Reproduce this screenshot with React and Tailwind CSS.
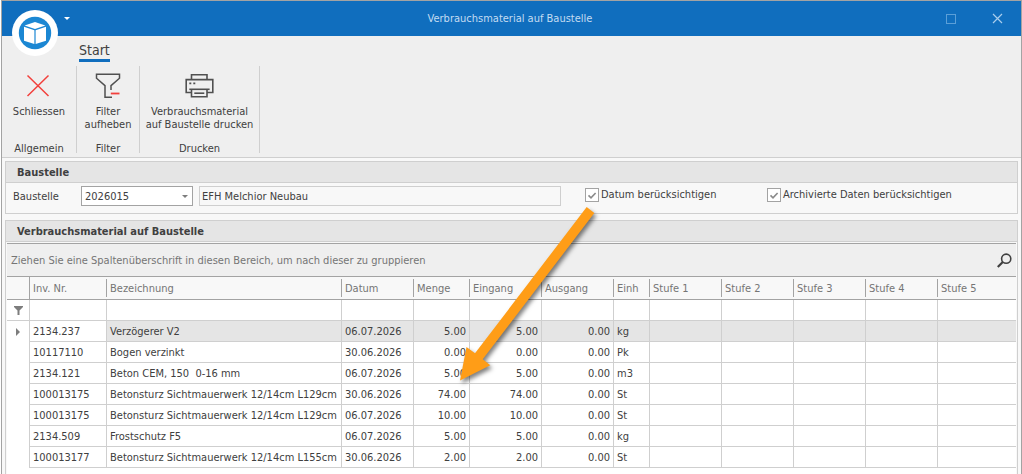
import React, { useState } from "react";

const columns = [
  { key: "nr", label: "Inv. Nr.", width: "w-[77px]" },
  { key: "name", label: "Bezeichnung", width: "w-[235px]" },
  { key: "date", label: "Datum", width: "w-[72px]" },
  { key: "menge", label: "Menge", width: "w-[56px]", right: true },
  { key: "eingang", label: "Eingang", width: "w-[72px]", right: true },
  { key: "ausgang", label: "Ausgang", width: "w-[72px]", right: true },
  { key: "einh", label: "Einh", width: "w-[36px]" },
  { key: "s1", label: "Stufe 1", width: "w-[72px]" },
  { key: "s2", label: "Stufe 2", width: "w-[72px]" },
  { key: "s3", label: "Stufe 3", width: "w-[72px]" },
  { key: "s4", label: "Stufe 4", width: "w-[72px]" },
  { key: "s5", label: "Stufe 5", width: "" },
];

const rows = [
  { nr: "2134.237", name: "Verzögerer V2", date: "06.07.2026", menge: "5.00", eingang: "5.00", ausgang: "0.00", einh: "kg" },
  { nr: "10117110", name: "Bogen verzinkt", date: "30.06.2026", menge: "0.00", eingang: "0.00", ausgang: "0.00", einh: "Pk" },
  { nr: "2134.121", name: "Beton CEM, 150  0-16 mm", date: "06.07.2026", menge: "5.00", eingang: "5.00", ausgang: "0.00", einh: "m3" },
  { nr: "100013175", name: "Betonsturz Sichtmauerwerk 12/14cm L129cm", date: "30.06.2026", menge: "74.00", eingang: "74.00", ausgang: "0.00", einh: "St" },
  { nr: "100013175", name: "Betonsturz Sichtmauerwerk 12/14cm L129cm", date: "06.07.2026", menge: "10.00", eingang: "10.00", ausgang: "0.00", einh: "St" },
  { nr: "2134.509", name: "Frostschutz F5", date: "06.07.2026", menge: "5.00", eingang: "5.00", ausgang: "0.00", einh: "kg" },
  { nr: "100013177", name: "Betonsturz Sichtmauerwerk 12/14cm L155cm", date: "30.06.2026", menge: "2.00", eingang: "2.00", ausgang: "0.00", einh: "St" },
];

const Logo = () => (
  <svg viewBox="0 0 46 46" className="w-full h-full">
    <circle cx="23" cy="23" r="23" fill="#fff" />
    <circle cx="23" cy="23" r="16.2" fill="#1b87d3" />
    <path d="M23 12 L33.4 15.4 L23 18.9 L12.6 15.4 Z" fill="#fff" />
    <path d="M12 16.8 L22.4 20.2 V34 L12 30.8 Z" fill="#fff" />
    <path d="M34 16.8 L23.6 20.2 V34 L34 30.8 Z" fill="#fff" />
  </svg>
);

const CloseIcon = () => (
  <svg width="32" height="32" viewBox="0 0 32 32" fill="none" stroke="#f2403c" strokeWidth="1.5">
    <path d="M4.5 5.5 L25.5 26 M25.5 5.5 L4.5 26" />
  </svg>
);

const FilterIcon = () => (
  <svg width="32" height="32" viewBox="0 0 32 32" fill="none" stroke="#505050" strokeWidth="1.5">
    <path d="M19 20 V15.6 L27.5 8.2 V4.2 H4.5 V8.2 L13 15.6 V27.2 H20" />
    <path d="M18.8 23.5 H27.5" stroke="#f2403c" strokeWidth="1.8" />
  </svg>
);

const PrintIcon = () => (
  <svg width="32" height="32" viewBox="0 0 32 32" fill="none" stroke="#505050" strokeWidth="1.6">
    <path d="M7.5 9.5 V4.8 H23 V9.5" />
    <path d="M7.5 22.5 H2.2 V9.6 H28.8 V22.5 H23" />
    <path d="M5.3 19.3 H25.6" />
    <path d="M7.5 19.3 V26.8 H23 V19.3" />
    <path d="M10.3 23.2 H20.3" />
    <path d="M5.3 13.4 H7.3 M9.3 13.4 H11.3" />
  </svg>
);

const RibbonGroup = ({ title, label, icon, width }) => (
  <div className={`${width} flex flex-col items-center border-r border-[#cfcfcf]`}>
    <button className="flex flex-col items-center text-center leading-[13px] whitespace-pre">
      <span className="h-[39px] pt-1">{icon}</span>
      {label}
    </button>
    <div className="mt-auto leading-[8px]">{title}</div>
  </div>
);

const GroupHeader = ({ children }) => (
  <h2 className="h-[21px] pl-[11px] leading-[22px] font-bold bg-[#e5e5e5] border-b border-[#cfcfcf]">
    {children}
  </h2>
);

const CheckBox = ({ id, label }) => {
  const [checked, setChecked] = useState(true);
  return (
    <div className="flex items-center gap-[2px]">
      <span className="grid">
        <input
          id={id}
          type="checkbox"
          checked={checked}
          onChange={(e) => setChecked(e.target.checked)}
          className="col-start-1 row-start-1 appearance-none w-[14px] h-[14px] bg-white border border-[#a3a3a3]"
        />
        {checked && (
          <svg viewBox="0 0 14 14" className="col-start-1 row-start-1 w-[14px] h-[14px] pointer-events-none" fill="none" stroke="#8a8a8a" strokeWidth="1.6">
            <path d="M3.5 7.4 L6 9.9 L10.6 5" />
          </svg>
        )}
      </span>
      <label htmlFor={id} className="leading-4">{label}</label>
    </div>
  );
};

// Hinweispfeil über der Tabelle
const Arrow = () => (
  <svg
    width="160"
    height="200"
    viewBox="450 195 160 200"
    className="absolute left-[448px] top-[194px] pointer-events-none drop-shadow-[2px_3px_2px_rgba(0,0,0,0.5)]"
  >
    <path d="M586.7 207 L594.3 213 L482.7 359.3 L490.3 365.3 L460 380.5 L466.5 347 L475 353.3 Z" fill="#ff9d17" />
  </svg>
);

export default function App() {
  const [site, setSite] = useState("2026015");
  const [selected, setSelected] = useState(0);

  return (
    <div className="relative flex flex-col min-h-screen ml-px border-t border-x border-[#a3a3a3] bg-[#f8f8f8] font-['DejaVu_Sans_Condensed','DejaVu_Sans',sans-serif] text-[11px] text-[#404040]">
      <header className="relative flex items-center h-[35px] bg-[#106ebe] text-[#c3dcf2]">
        <button className="absolute left-[10px] top-[9px] w-[46px] h-[46px]" aria-label="Menü">
          <Logo />
        </button>
        <button className="ml-[62px]" aria-label="Schnellzugriff">
          <svg width="6" height="3" viewBox="0 0 6 3"><path d="M0 0 H6 L3 3 Z" fill="#fff" /></svg>
        </button>
        <h1 className="flex-1 pt-px pl-1 text-center">Verbrauchsmaterial auf Baustelle</h1>
        <div className="flex items-center gap-9 pr-[18px]">
          <button aria-label="Maximieren" className="w-[10px] h-[10px] border border-[#5b9fd8]"></button>
          <button aria-label="Fenster schliessen">
            <svg width="11" height="11" viewBox="0 0 11 11" stroke="#a9cdec" strokeWidth="1.2">
              <path d="M1 1 L10 10 M10 1 L1 10" />
            </svg>
          </button>
        </div>
      </header>

      <nav className="flex h-[30px] pl-[77px] pt-1 bg-[#efefef]">
        <button className="h-[22px] leading-[20px] text-[14px] border-b-3 border-[#106ebe]">Start</button>
      </nav>

      <section className="flex h-[92px] pb-1 bg-[#efefef] border-b border-[#cfcfcf]">
        <RibbonGroup width="w-[75px]" title="Allgemein" label="Schliessen" icon={<CloseIcon />} />
        <RibbonGroup width="w-[63px]" title="Filter" label={"Filter\naufheben"} icon={<FilterIcon />} />
        <RibbonGroup width="w-[120px]" title="Drucken" label={"Verbrauchsmaterial\nauf Baustelle drucken"} icon={<PrintIcon />} />
      </section>

      <section className="mt-[3px] mx-[3px] border border-[#cfcfcf]">
        <GroupHeader>Baustelle</GroupHeader>
        <div className="flex items-start h-[30px] pt-[3px] pl-[7px]">
          <label htmlFor="site" className="w-[68px] leading-[22px]">Baustelle</label>
          <div className="grid items-center w-28 mr-[6px]">
            <select
              id="site"
              value={site}
              onChange={(e) => setSite(e.target.value)}
              className="col-start-1 row-start-1 appearance-none w-full h-5 pt-[2px] pl-[3px] bg-white border border-[#a3a3a3]"
            >
              <option>2026015</option>
            </select>
            <svg width="6" height="3" viewBox="0 0 6 3" className="col-start-1 row-start-1 justify-self-end mr-[5px] pointer-events-none">
              <path d="M0 0 H6 L3 3 Z" fill="#7d7d7d" />
            </svg>
          </div>
          <input
            aria-label="Bezeichnung der Baustelle"
            readOnly
            value="EFH Melchior Neubau"
            className="w-[362px] h-5 px-[2px] border border-[#cfcfcf]"
          />
          <div className="grid grid-cols-[182px_auto] pt-px pl-6">
            <CheckBox id="datum" label="Datum berücksichtigen" />
            <CheckBox id="archiv" label="Archivierte Daten berücksichtigen" />
          </div>
        </div>
      </section>

      <section className="flex flex-col flex-1 mt-[6px] mx-[3px] border-t border-x border-[#cfcfcf]">
        <GroupHeader>Verbrauchsmaterial auf Baustelle</GroupHeader>
        <div className="flex-1 mt-px mx-px bg-white">
          <div className="flex items-center justify-between h-[34px] pl-1 pr-1 bg-[#efefef] border-y border-[#a3a3a3] text-[#757575]">
            <span className="pt-[3px]">Ziehen Sie eine Spaltenüberschrift in diesen Bereich, um nach dieser zu gruppieren</span>
            <button aria-label="Suchen">
              <svg width="15" height="15" viewBox="0 0 15 15" fill="none" stroke="#404040" strokeWidth="1.6">
                <circle cx="9.2" cy="5.7" r="4.6" />
                <path d="M5.8 9 L0.8 14" strokeWidth="2.2" />
              </svg>
            </button>
          </div>
          <table className="w-full table-fixed border-separate border-spacing-0">
            <thead>
              <tr className="bg-[#f8f8f8] text-[#757575]">
                <th className="w-[23px] h-[23px] p-0 border-r border-b border-[#a3a3a3]"></th>
                {columns.map((c) => (
                  <th key={c.key} className={`${c.width} h-[23px] p-0 font-normal text-left border-b border-[#a3a3a3]`}>
                    <div className={`h-[18px] pl-[3px] leading-5 ${c.key === "s5" ? "" : "border-r border-[#a3a3a3]"}`}>
                      {c.label}
                    </div>
                  </th>
                ))}
              </tr>
              <tr>
                <td className="h-[21px] p-0 border-r border-b border-[#cfcfcf]">
                  <svg width="9" height="9" viewBox="0 0 9 9" className="mx-auto">
                    <path d="M0 0 H9 V1 L5.5 4.5 V9 H3.5 V4.5 L0 1 Z" fill="#7d7d7d" />
                  </svg>
                </td>
                {columns.map((c) => (
                  <td key={c.key} className="h-[21px] p-0 border-r last:border-r-0 border-b border-[#cfcfcf]"></td>
                ))}
              </tr>
            </thead>
            <tbody>
              {rows.map((row, i) => (
                <tr key={i} onClick={() => setSelected(i)}>
                  <td className="h-[21px] p-0 border-r border-[#cfcfcf]">
                    {selected === i && (
                      <svg width="4" height="8" viewBox="0 0 4 8" className="mx-auto">
                        <path d="M0 0 L4 4 L0 8 Z" fill="#7d7d7d" />
                      </svg>
                    )}
                  </td>
                  {columns.map((c, n) => (
                    <td
                      key={c.key}
                      className={`h-[21px] pt-[2px] pb-0 pl-[3px] pr-[3px] leading-[18px] whitespace-pre border-r last:border-r-0 border-b border-[#cfcfcf] ${c.right ? "text-right" : ""} ${selected === i && n > 0 ? "bg-[#e5e5e5]" : ""}`}
                    >
                      {row[c.key]}
                    </td>
                  ))}
                </tr>
              ))}
            </tbody>
          </table>
        </div>
      </section>

      <Arrow />
    </div>
  );
}
